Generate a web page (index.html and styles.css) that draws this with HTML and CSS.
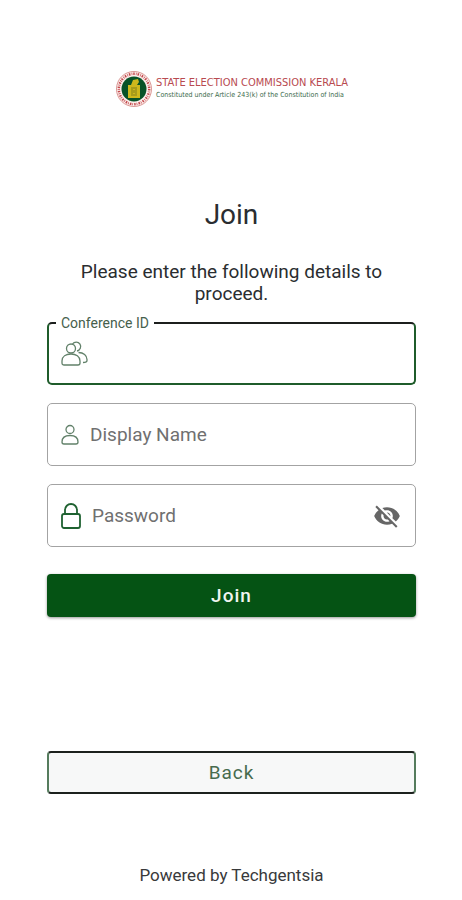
FILE: index.html
```html
<!DOCTYPE html>
<html lang="en">
<head>
    <meta charset="UTF-8">
    <meta name="viewport" content="width=device-width, initial-scale=1.0">
    <title>Join</title>
    <link rel="stylesheet" href="styles.css">
</head>
<body>
    <div class="page">
        <header class="brand">
            <svg class="brand-logo" viewBox="0 0 38 38" aria-hidden="true">
                <circle cx="19" cy="19" r="18" fill="#fbeeeb"/>
                <circle cx="19" cy="19" r="17.5" fill="none" stroke="#dc9a98" stroke-width="1"/>
                <circle cx="19" cy="19" r="15.2" fill="none" stroke="#c4484d" stroke-width="2.4" stroke-dasharray="1.5 1.2 .7 1"/>
                <circle cx="19" cy="19" r="12.5" fill="#075228"/>
                <path d="M13 15h3l2-5 5-1 1 3-2 3h3v13H13z" fill="#cdb81c"/>
                <path d="M16 18h6M16 25h6M17 19v5M21 19v5M19 20v3" fill="none" stroke="#81801a" stroke-width="1"/>
            </svg>
            <div class="brand-text">
                <div class="brand-name">STATE ELECTION COMMISSION KERALA</div>
                <div class="brand-note">Constituted under Article 243(k) of the Constitution of India</div>
            </div>
        </header>

        <main>
            <h1>Join</h1>
            <p class="intro">Please enter the following details to proceed.</p>

            <form id="joinForm">
                <div class="field active">
                    <label class="floating" for="conference">Conference ID</label>
                    <svg class="icon" viewBox="0 0 28 28" aria-hidden="true">
                        <circle cx="10" cy="8.5" r="4.5"/>
                        <path d="M11.5 4a4.5 4.5 0 1 1 4.5 7"/>
                        <path d="M1 23v-2c0-4.500 4-7 9-7s9 2.500 9 7v2c0 1.500-1 2-2 2H3c-1 0-2-.5-2-2z"/>
                        <path d="M17.500 12.500c5 0 8.500 3 8.500 7v1c0 1.500-1 2-4 2"/>
                    </svg>
                    <input type="text" id="conference">
                </div>
                <div class="field">
                    <svg class="icon small" viewBox="0 0 20 22" aria-hidden="true">
                        <circle cx="10" cy="5.500" r="4"/>
                        <path d="M2 18c0-4 3-6.500 8-6.500s8 2.500 8 6.500c0 1.500-.5 2-2 2H4c-1.500 0-2-.5-2-2z"/>
                    </svg>
                    <input type="text" id="displayName" placeholder="Display Name" aria-label="Display Name">
                </div>
                <div class="field">
                    <svg class="icon lock" viewBox="0 0 22 28" aria-hidden="true">
                        <rect x="2" y="12" width="18" height="14" rx="2"/>
                        <path d="M5 12V8a6 6 0 0 1 12 0v4"/>
                    </svg>
                    <input type="password" id="password" placeholder="Password" aria-label="Password">
                    <button type="button" class="toggle" aria-label="Show password">
                        <svg viewBox="0 0 24 24" aria-hidden="true">
                            <path d="M12 7c2.76 0 5 2.24 5 5 0 .65-.13 1.26-.36 1.83l2.92 2.92c1.51-1.26 2.7-2.89 3.43-4.75-1.73-4.39-6-7.5-11-7.5-1.4 0-2.74.25-3.98.7l2.16 2.16C10.74 7.13 11.35 7 12 7zM2 4.27l2.28 2.28.46.46C3.08 8.3 1.78 10.02 1 12c1.73 4.39 6 7.5 11 7.5 1.55 0 3.03-.3 4.38-.84l.42.42L19.73 22 21 20.73 3.27 3 2 4.27zM7.53 9.8l1.55 1.55c-.05.21-.08.43-.08.65 0 1.66 1.34 3 3 3 .22 0 .44-.03.65-.08l1.55 1.55c-.67.33-1.41.53-2.2.53-2.76 0-5-2.24-5-5 0-.79.2-1.53.53-2.2zm4.31-.78l3.15 3.15.02-.16c0-1.66-1.34-3-3-3l-.17.01z"/>
                        </svg>
                    </button>
                </div>
                <button type="submit" class="btn join">Join</button>
                <button type="button" class="btn back">Back</button>
            </form>
        </main>

        <footer>Powered by Techgentsia</footer>
    </div>
</body>
</html>
```
FILE: styles.css
```css
* {
    box-sizing: border-box;
}
body {
    margin: 0;
    background-color: #fff;
    color: #2a2d30;
    font-family: Roboto, "Liberation Sans", sans-serif;
}
.page {
    max-width: 600px;
    margin: 0 auto;
    padding: 70px 46px 14px 47px;
}
.brand {
    display: flex;
    justify-content: center;
    align-items: center;
    gap: 3px;
}
.brand-logo {
    width: 38px;
    height: 38px;
}
.brand-text {
    white-space: nowrap;
}
.brand-name {
    color: #b84a50;
    font: 11px/12px "DejaVu Sans Condensed", "DejaVu Sans", sans-serif;
}
.brand-note {
    color: #3c6b4c;
    font: 7px/12px "DejaVu Sans Condensed", "DejaVu Sans", sans-serif;
}
h1 {
    margin: 91px 0 30px;
    font-size: 28px;
    line-height: 32px;
    font-weight: 400;
    text-align: center;
}
.intro {
    margin: 0 0 17px;
    padding: 0 30px;
    font-size: 19px;
    line-height: 22px;
    text-align: center;
}
.field {
    position: relative;
    display: flex;
    align-items: center;
    gap: 10px;
    height: 63px;
    margin-bottom: 18px;
    padding: 0 14px 0 12px;
    border: 1px solid #a3a3a3;
    border-radius: 5px;
}
.field.active {
    border: 2px solid #1f5c2b;
    border-top-color: #1c1f1d;
}
.floating {
    position: absolute;
    top: -9px;
    left: 7px;
    padding: 0 5px;
    background-color: #fff;
    color: #46604c;
    font-size: 14px;
    line-height: 16px;
}
.icon {
    flex: none;
    width: 28px;
    height: 28px;
    fill: none;
    stroke: #62816a;
    stroke-width: 1.3;
}
.icon.small {
    width: 20px;
    height: 22px;
}
.icon.lock {
    width: 22px;
    height: 28px;
    stroke: #1f6231;
    stroke-width: 1.8;
}
.field input {
    flex: 1;
    min-width: 0;
    height: 40px;
    padding: 0;
    border: none;
    outline: none;
    background: none;
    color: #202326;
    font: 19px/24px Roboto, sans-serif;
}
.field input::placeholder {
    color: #707070;
    opacity: 1;
}
.toggle {
    width: 28px;
    height: 28px;
    padding: 0;
    border: none;
    background: none;
    cursor: pointer;
}
.toggle svg {
    display: block;
    fill: #666;
}
.btn {
    display: block;
    width: 100%;
    height: 43px;
    padding: 0;
    border-radius: 4px;
    font: 500 19px/24px Roboto, sans-serif;
    letter-spacing: 1px;
    cursor: pointer;
}
.join {
    margin-top: 27px;
    border: none;
    background-color: #055314;
    color: #f0f5f0;
    box-shadow: 0 1px 3px rgba(0, 0, 0, 0.4);
}
.back {
    margin-top: 134px;
    border: 2px solid #557c5d;
    border-top-color: #1c211d;
    border-bottom-color: #1c211d;
    background-color: #f7f8f8;
    color: #476b4e;
    font-weight: 400;
}
footer {
    margin-top: 70px;
    color: #38393b;
    font-size: 17px;
    line-height: 22px;
    text-align: center;
}
```
